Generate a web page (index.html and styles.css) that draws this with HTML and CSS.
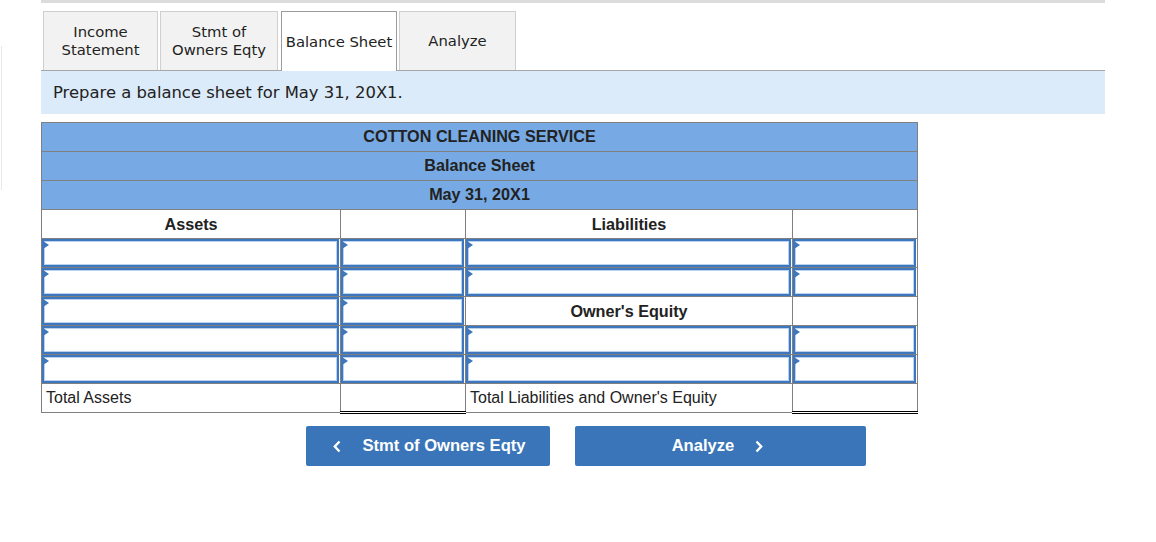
FILE: index.html
```html
<!DOCTYPE html>
<html>
<head>
<meta charset="utf-8">
<link rel="stylesheet" href="styles.css">
</head>
<body>
<div class="edge"></div>
<div class="page">
  <div class="topbar"></div>
  <div class="tabs">
    <div class="tab t1">Income<br>Statement</div>
    <div class="tab t2">Stmt of<br>Owners Eqty</div>
    <div class="tab t3 active">Balance Sheet</div>
    <div class="tab t4">Analyze</div>
  </div>
  <div class="instr">Prepare a balance sheet for May 31, 20X1.</div>
  <table class="bs">
    <colgroup>
      <col class="c1"><col class="c2"><col class="c3"><col class="c4">
    </colgroup>
    <tr class="hd"><td colspan="4">COTTON CLEANING SERVICE</td></tr>
    <tr class="hd"><td colspan="4">Balance Sheet</td></tr>
    <tr class="hd"><td colspan="4">May 31, 20X1</td></tr>
    <tr><td class="lbl">Assets</td><td></td><td class="lbl">Liabilities</td><td></td></tr>
    <tr><td class="in"><div class="inp"></div></td><td class="in"><div class="inp"></div></td><td class="in"><div class="inp"></div></td><td class="in"><div class="inp"></div></td></tr>
    <tr><td class="in"><div class="inp"></div></td><td class="in"><div class="inp"></div></td><td class="in"><div class="inp"></div></td><td class="in"><div class="inp"></div></td></tr>
    <tr><td class="in"><div class="inp"></div></td><td class="in"><div class="inp"></div></td><td class="lbl">Owner's Equity</td><td></td></tr>
    <tr><td class="in"><div class="inp"></div></td><td class="in"><div class="inp"></div></td><td class="in"><div class="inp"></div></td><td class="in"><div class="inp"></div></td></tr>
    <tr><td class="in"><div class="inp"></div></td><td class="in"><div class="inp"></div></td><td class="in"><div class="inp"></div></td><td class="in"><div class="inp"></div></td></tr>
    <tr class="tot"><td class="txt">Total Assets</td><td class="sum"></td><td class="txt">Total Liabilities and Owner's Equity</td><td class="sum"></td></tr>
  </table>
  <div class="nav">
    <button class="btn prev"><svg class="chev" width="8" height="13" viewBox="0 0 8 13"><polyline points="6.5,1.5 1.8,6.5 6.5,11.5" fill="none" stroke="#fff" stroke-width="2.4"/></svg><span>Stmt of Owners Eqty</span></button>
    <button class="btn next"><span>Analyze</span><svg class="chev" width="8" height="13" viewBox="0 0 8 13"><polyline points="1.5,1.5 6.2,6.5 1.5,11.5" fill="none" stroke="#fff" stroke-width="2.4"/></svg></button>
  </div>
</div>
</body>
</html>
```
FILE: styles.css
```css
html, body {
  margin: 0;
  padding: 0;
  background: #fff;
}
body {
  position: relative;
  width: 1156px;
  height: 542px;
  overflow: hidden;
}
.edge {
  position: absolute;
  left: 0;
  top: 46px;
  width: 1px;
  height: 144px;
  border-right: 1px solid #e8e8e8;
}
.page {
  margin-left: 41px;
  width: 1064px;
}
.topbar {
  height: 3px;
  background: #dcdcdc;
}
.tabs {
  display: flex;
  margin-top: 8px;
  padding-left: 2px;
  height: 59px;
  border-bottom: 1px solid #a6a6a6;
  font-family: "DejaVu Sans", Verdana, sans-serif;
  font-size: 14.8px;
  color: #222;
}
.tab {
  display: flex;
  align-items: center;
  justify-content: center;
  text-align: center;
  line-height: 18px;
  box-sizing: border-box;
  height: 59px;
  background: #f2f2f2;
  border: 1px solid #cfcfcf;
  border-bottom: none;
  margin-right: 2px;
}
.t1 { width: 115px; }
.t2 { width: 118px; margin-right: 3px; }
.t3 { width: 116px; margin-right: 2px; }
.t4 { width: 117px; }
.tab.active {
  background: #fff;
  border-color: #9c9c9c;
  height: 60px;
  position: relative;
  z-index: 1;
}
.instr {
  height: 43px;
  background: #dcebf9;
  font-family: "DejaVu Sans", Verdana, sans-serif;
  font-size: 16.4px;
  color: #222;
  display: flex;
  align-items: center;
  padding-left: 12px;
}
.bs {
  margin-top: 8px;
  border-collapse: collapse;
  width: 876px;
  table-layout: fixed;
  font-family: "Liberation Sans", Arial, sans-serif;
  font-size: 16.2px;
  color: #222;
}
.c1 { width: 299px; }
.c2 { width: 125px; }
.c3 { width: 327px; }
.c4 { width: 125px; }
.bs tr {
  height: 29px;
}
.bs td {
  border: 1px solid #808080;
  padding: 0;
}
.hd td {
  background: #77aae4;
  text-align: center;
  font-weight: bold;
  padding-bottom: 1px;
}
.bs td.lbl {
  text-align: center;
  font-weight: bold;
}
.bs td.in {
  padding: 0 1px 0 0;
  vertical-align: top;
}
.inp {
  position: relative;
  box-sizing: border-box;
  height: 28px;
  border: 2px solid #3e77bd;
  box-shadow: inset 0 0 0 1px #b9d2ef;
  background: #fff;
}
.inp::before {
  content: "";
  position: absolute;
  left: -1px;
  top: 0;
  border-left: 6px solid #3e77bd;
  border-top: 4px solid transparent;
  border-bottom: 4px solid transparent;
}
.bs td.txt {
  padding-left: 4px;
  font-size: 16px;
}
.bs td.sum {
  border-top: 1px solid #000;
  border-bottom: 3px double #000;
}
.nav {
  display: flex;
  margin-top: 12px;
  margin-left: 265px;
  gap: 25px;
}
.btn {
  display: flex;
  align-items: center;
  justify-content: center;
  gap: 21px;
  height: 40px;
  border: none;
  border-radius: 2px;
  background: #3a75b9;
  color: #fff;
  font-family: "Liberation Sans", Arial, sans-serif;
  font-weight: bold;
  font-size: 16.6px;
  padding: 0;
}
.prev { width: 244px; padding-left: 3px; }
.next { width: 291px; padding-right: 6px; }
.chev {
  display: block;
}
```
